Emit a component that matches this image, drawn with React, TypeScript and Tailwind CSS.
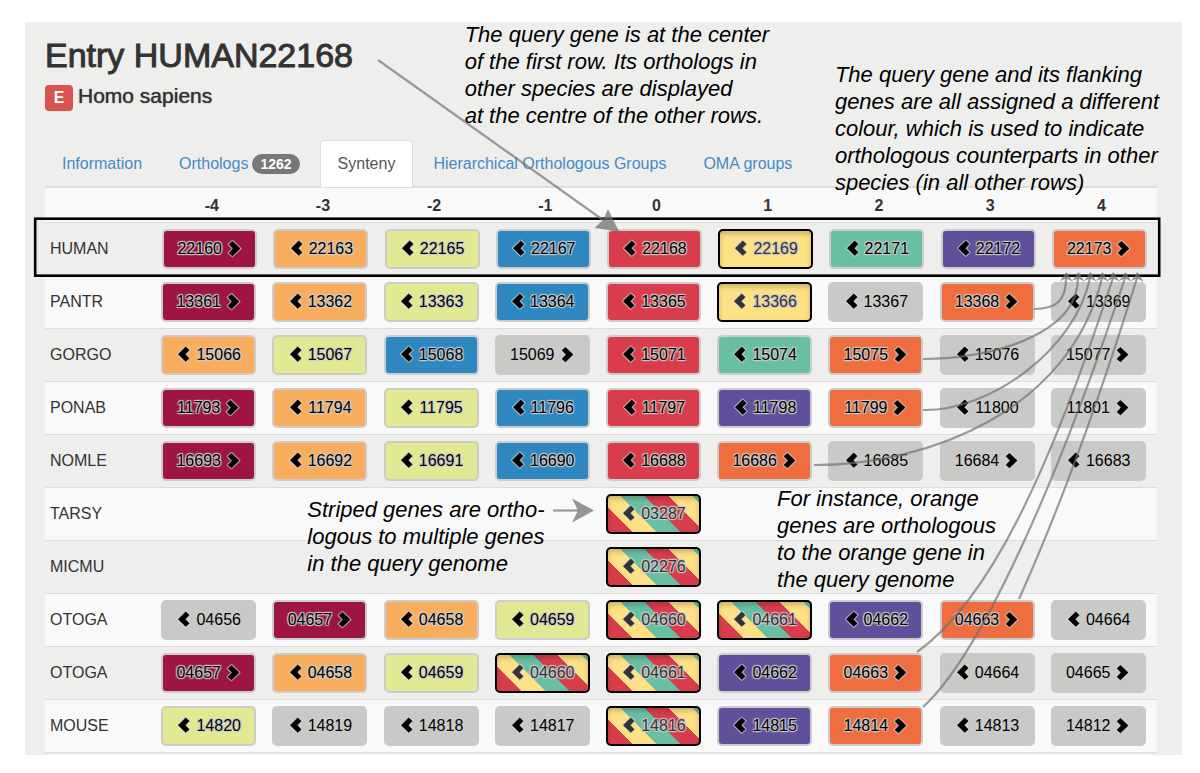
import React from "react";

type Tone =
  | "maroon"
  | "apricot"
  | "lime"
  | "blue"
  | "red"
  | "yellow"
  | "teal"
  | "purple"
  | "orange"
  | "grey"
  | "striped";

type Gene = { id: string; tone: Tone; dir: "left" | "right" };

const tones: Record<string, Tone> = {
  m: "maroon",
  a: "apricot",
  l: "lime",
  b: "blue",
  r: "red",
  y: "yellow",
  t: "teal",
  p: "purple",
  o: "orange",
  g: "grey",
  s: "striped",
};

const toneClasses: Record<Tone, string> = {
  maroon: "border-[#cccccc] bg-[#9e1544] text-black",
  apricot: "border-[#cccccc] bg-[#f9ae5f] text-black",
  lime: "border-[#cccccc] bg-[#e3e893] text-black",
  blue: "border-[#cccccc] bg-[#2f87c0] text-black",
  red: "border-[#cccccc] bg-[#d93d4c] text-black",
  yellow:
    "border-black bg-[#fee085] text-[#333333] shadow-[inset_0_3px_5px_rgba(0,0,0,0.2)]",
  teal: "border-[#cccccc] bg-[#69bfa3] text-black",
  purple: "border-[#cccccc] bg-[#60509b] text-black",
  orange: "border-[#cccccc] bg-[#ee6e3f] text-black",
  grey: "border-[#c9c9c8] bg-[#c9c9c8] text-black",
  striped:
    "border-black text-[#333333] shadow-[inset_0_3px_5px_rgba(0,0,0,0.2)] bg-[repeating-linear-gradient(45deg,#d93d4c_0px,#d93d4c_17px,#fee085_17px,#fee085_34px,#69bfa3_34px,#69bfa3_51px)]",
};

// Each gene is written as tone letter, strand arrow and number; "-" is an empty slot.
const rows: { species: string; genes: string }[] = [
  { species: "HUMAN", genes: "m>22160 a<22163 l<22165 b<22167 r<22168 y<22169 t<22171 p<22172 o>22173" },
  { species: "PANTR", genes: "m>13361 a<13362 l<13363 b<13364 r<13365 y<13366 g<13367 o>13368 g<13369" },
  { species: "GORGO", genes: "a<15066 l<15067 b<15068 g>15069 r<15071 t<15074 o>15075 g<15076 g>15077" },
  { species: "PONAB", genes: "m>11793 a<11794 l<11795 b<11796 r<11797 p<11798 o>11799 g<11800 g>11801" },
  { species: "NOMLE", genes: "m>16693 a<16692 l<16691 b<16690 r<16688 o>16686 g<16685 g>16684 g<16683" },
  { species: "TARSY", genes: "- - - - s<03287 - - - -" },
  { species: "MICMU", genes: "- - - - s<02276 - - - -" },
  { species: "OTOGA", genes: "g<04656 m>04657 a<04658 l<04659 s<04660 s<04661 p<04662 o>04663 g<04664" },
  { species: "OTOGA", genes: "m>04657 a<04658 l<04659 s<04660 s<04661 p<04662 o>04663 g<04664 g>04665" },
  { species: "MOUSE", genes: "l<14820 g<14819 g<14818 g<14817 s<14816 p<14815 o>14814 g<14813 g>14812" },
];

const offsets = ["-4", "-3", "-2", "-1", "0", "1", "2", "3", "4"];

function parseGene(code: string): Gene | null {
  if (code === "-") return null;
  return {
    tone: tones[code[0]],
    dir: code[1] === "<" ? "left" : "right",
    id: code.slice(2),
  };
}

const chevronPaths = {
  left: "M9.7 -.2 13.3 3 9.3 7.2 13.3 11.4 9.7 14.6 2.2 7.2Z",
  right: "M6.5 .2 14.2 7.6 6.5 15 2.9 11.9 7 7.6 2.9 3.3Z",
};

function Chevron({ dir }: { dir: "left" | "right" }) {
  return (
    <svg viewBox="0 0 16 16" className="size-4 shrink-0 overflow-visible" aria-hidden="true">
      <path
        d={chevronPaths[dir]}
        fill="none"
        stroke="#dddddd"
        strokeOpacity="0.7"
        strokeWidth="2.4"
        strokeLinejoin="round"
      />
      <path
        d={chevronPaths[dir]}
        fill="currentColor"
        stroke="currentColor"
        strokeWidth="0.4"
      />
    </svg>
  );
}

function GeneButton({ gene }: { gene: Gene }) {
  return (
    <button
      type="button"
      className={`flex h-10 w-[95px] items-center justify-center gap-1 rounded-[5px] border-2 text-base leading-6 [text-shadow:-1px_-1px_1px_#cccccc,1px_-1px_1px_#cccccc,-1px_1px_1px_#cccccc,1px_1px_1px_#cccccc] ${toneClasses[gene.tone]}`}
    >
      {gene.dir === "left" && <Chevron dir="left" />}
      <span>{gene.id}</span>
      {gene.dir === "right" && <Chevron dir="right" />}
    </button>
  );
}

function Tab({ children, active = false }: { children: React.ReactNode; active?: boolean }) {
  return (
    <li>
      <a
        href="#"
        aria-current={active ? "page" : undefined}
        className={
          active
            ? "-mb-px flex h-[47px] items-center rounded-t-[4px] border border-b-0 border-[#dddddd] bg-white px-[17px] text-[#555555]"
            : "flex h-[46px] items-center gap-1 px-[17px] pt-[2px] text-[#428bca]"
        }
      >
        {children}
      </a>
    </li>
  );
}

function Note({ lines, place }: { lines: string[]; place: string }) {
  return (
    <p className={`absolute whitespace-nowrap text-[22px] leading-[27px] italic text-black ${place}`}>
      {lines.map((line) => (
        <span key={line} className="block">
          {line}
        </span>
      ))}
    </p>
  );
}

const curves = [
  "M1034 309C1057 309 1066 300 1066 278",
  "M923 359C990 359 1078 335 1078 278",
  "M923 410C990 411 1075 350 1090 278",
  "M814 465C930 465 1070 410 1102 278",
  "M917 652C990 600 1050 470 1113 278",
  "M923 707C975 660 1050 505 1125 278",
  "M1019 599C1050 530 1090 430 1137 278",
];

const heads = [1066, 1078, 1090, 1102, 1113, 1125, 1137];

function Arrows() {
  return (
    <svg
      viewBox="25 22 1157 733"
      preserveAspectRatio="none"
      className="pointer-events-none absolute inset-0 size-full"
      aria-hidden="true"
    >
      <rect x="35.2" y="218.7" width="1124" height="57" fill="none" stroke="#000" strokeWidth="2.6" />
      <g fill="none" stroke="#6e6e6e" strokeOpacity="0.68" strokeWidth="2.2">
        <path d="M378 60 603 220" />
        <path d="M553 510.5H579" />
        {curves.map((d) => (
          <path key={d} d={d} />
        ))}
      </g>
      <g fill="#6e6e6e" fillOpacity="0.72">
        <path d="M619 231.5 594.5 228 603 220 608 209Z" />
        <path d="M594 510.5 572 522.5 578 510.5 572 498.5Z" />
        {heads.map((x) => (
          <path key={x} d={`M${x + 0.5} 272 ${x + 6.5} 281.5 ${x} 278.5 ${x - 6} 281Z`} />
        ))}
      </g>
    </svg>
  );
}

export default function App() {
  return (
    <div className="min-h-screen bg-white pt-[22px] pr-[18px] pl-[25px] font-['Liberation_Sans',Arial,sans-serif] text-base text-[#333333]">
      <main className="relative bg-[#eeeeec] pt-[13px] pr-[25px] pb-[2px] pl-5">
        <h1 className="text-[34px] leading-10 font-normal [-webkit-text-stroke:1px_#333333]">
          Entry HUMAN22168
        </h1>
        <h2 className="mt-[10px] flex h-[26px] items-center gap-[5px] text-[21px] leading-6 font-normal [text-shadow:0_0_1px_#333333]">
          <span className="flex h-[26px] w-7 items-center justify-center rounded-[4px] bg-[#d9534f] text-base font-bold text-white [text-shadow:none]">
            E
          </span>
          <span className="pb-1">Homo sapiens</span>
        </h2>

        <nav className="mt-[29px] border-b-2 border-[#dddddd]">
          <ul className="flex gap-[3px]">
            <Tab>Information</Tab>
            <Tab>
              Orthologs
              <span className="flex h-5 items-center rounded-full bg-[#777777] px-2 text-sm leading-5 font-bold text-white">
                1262
              </span>
            </Tab>
            <Tab active>Synteny</Tab>
            <Tab>Hierarchical Orthologous Groups</Tab>
            <Tab>OMA groups</Tab>
          </ul>
        </nav>

        <table className="w-full table-fixed border-separate border-spacing-0">
          <thead>
            <tr className="h-[34px] bg-[#f9f9f9]">
              <td />
              {offsets.map((offset) => (
                <th key={offset} scope="col" className="p-0 pt-[2px] text-center font-bold">
                  {offset}
                </th>
              ))}
            </tr>
          </thead>
          <tbody>
            {rows.map((row, index) => (
              <tr key={index} className="even:bg-[#f9f9f9]">
                <th
                  scope="row"
                  className="h-[53px] border-t border-[#dddddd] p-0 pl-[5px] text-left font-normal"
                >
                  {row.species}
                </th>
                {row.genes.split(" ").map((code, column) => {
                  const gene = parseGene(code);
                  return (
                    <td
                      key={column}
                      className={`border-t border-[#dddddd] py-[6px] pr-0 ${index === 0 ? "pl-[6px]" : "pl-[5px]"}`}
                    >
                      {gene && <GeneButton gene={gene} />}
                    </td>
                  );
                })}
              </tr>
            ))}
          </tbody>
          <tfoot>
            <tr>
              <td colSpan={10} className="h-px border-t border-[#dddddd] p-0" />
            </tr>
          </tfoot>
        </table>

        <Note
          place="-top-px left-[38%]"
          lines={[
            "The query gene is at the center",
            "of the first row. Its orthologs in",
            "other species are displayed",
            "at the centre of the other rows.",
          ]}
        />
        <Note
          place="top-[39px] left-[70%]"
          lines={[
            "The query gene and its flanking",
            "genes are all assigned a different",
            "colour, which is used to indicate",
            "orthologous counterparts in other",
            "species (in all other rows)",
          ]}
        />
        <Note
          place="top-[474px] left-[24.4%]"
          lines={["Striped genes are ortho-", "logous to multiple genes", "in the query genome"]}
        />
        <Note
          place="top-[463px] left-[65%]"
          lines={[
            "For instance, orange",
            "genes are orthologous",
            "to the orange gene in",
            "the query genome",
          ]}
        />
        <Arrows />
      </main>
    </div>
  );
}
